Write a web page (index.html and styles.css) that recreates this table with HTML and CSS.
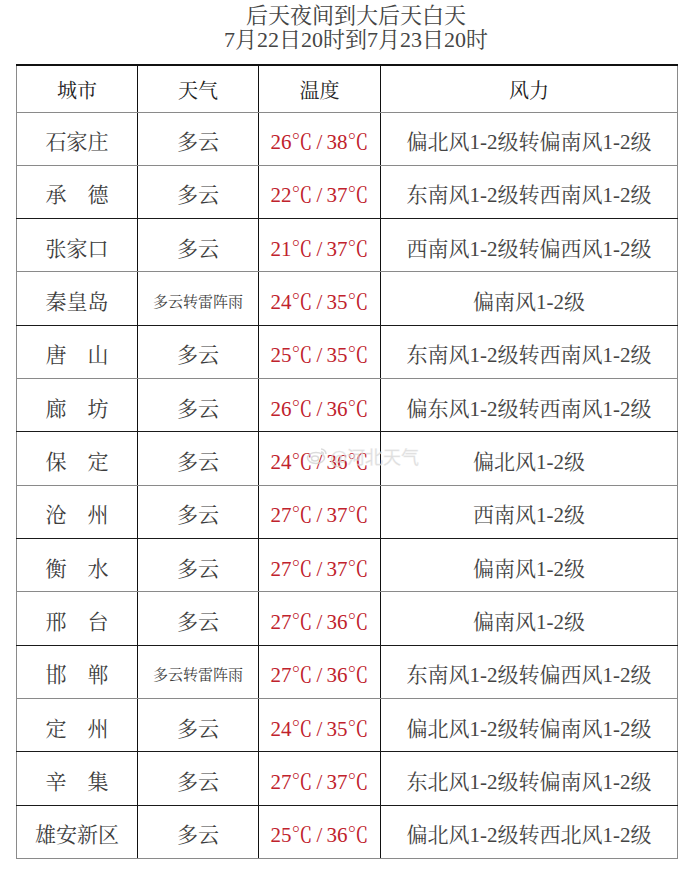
FILE: index.html
```html
<!DOCTYPE html>
<html lang="zh-CN">
<head>
<meta charset="utf-8">
<title>后天夜间到大后天白天</title>
<link rel="stylesheet" href="styles.css">
</head>
<body>
<div class="page">
  <div class="title">
    <div class="title-line">后天夜间到大后天白天</div>
    <div class="title-line">7月22日20时到7月23日20时</div>
  </div>
  <table class="forecast">
    <colgroup>
      <col class="c-city"><col class="c-weather"><col class="c-temp"><col class="c-wind">
    </colgroup>
    <thead>
      <tr class="head-row"><th>城市</th><th>天气</th><th>温度</th><th>风力</th></tr>
    </thead>
    <tbody>
      <tr class="row-gray"><td class="city">石家庄</td><td class="weather">多云</td><td class="temp">26℃<span class="slash">/</span>38℃</td><td class="wind">偏北风1-2级转偏南风1-2级</td></tr>
      <tr class="row-black"><td class="city">承　德</td><td class="weather">多云</td><td class="temp">22℃<span class="slash">/</span>37℃</td><td class="wind">东南风1-2级转西南风1-2级</td></tr>
      <tr class="row-gray"><td class="city">张家口</td><td class="weather">多云</td><td class="temp">21℃<span class="slash">/</span>37℃</td><td class="wind">西南风1-2级转偏西风1-2级</td></tr>
      <tr class="row-black"><td class="city">秦皇岛</td><td class="weather small">多云转雷阵雨</td><td class="temp">24℃<span class="slash">/</span>35℃</td><td class="wind">偏南风1-2级</td></tr>
      <tr class="row-gray"><td class="city">唐　山</td><td class="weather">多云</td><td class="temp">25℃<span class="slash">/</span>35℃</td><td class="wind">东南风1-2级转西南风1-2级</td></tr>
      <tr class="row-black"><td class="city">廊　坊</td><td class="weather">多云</td><td class="temp">26℃<span class="slash">/</span>36℃</td><td class="wind">偏东风1-2级转西南风1-2级</td></tr>
      <tr class="row-gray"><td class="city">保　定</td><td class="weather">多云</td><td class="temp">24℃<span class="slash">/</span>36℃</td><td class="wind">偏北风1-2级</td></tr>
      <tr class="row-black"><td class="city">沧　州</td><td class="weather">多云</td><td class="temp">27℃<span class="slash">/</span>37℃</td><td class="wind">西南风1-2级</td></tr>
      <tr class="row-gray"><td class="city">衡　水</td><td class="weather">多云</td><td class="temp">27℃<span class="slash">/</span>37℃</td><td class="wind">偏南风1-2级</td></tr>
      <tr class="row-black"><td class="city">邢　台</td><td class="weather">多云</td><td class="temp">27℃<span class="slash">/</span>36℃</td><td class="wind">偏南风1-2级</td></tr>
      <tr class="row-gray"><td class="city">邯　郸</td><td class="weather small">多云转雷阵雨</td><td class="temp">27℃<span class="slash">/</span>36℃</td><td class="wind">东南风1-2级转偏西风1-2级</td></tr>
      <tr class="row-black"><td class="city">定　州</td><td class="weather">多云</td><td class="temp">24℃<span class="slash">/</span>35℃</td><td class="wind">偏北风1-2级转偏南风1-2级</td></tr>
      <tr class="row-black"><td class="city">辛　集</td><td class="weather">多云</td><td class="temp">27℃<span class="slash">/</span>37℃</td><td class="wind">东北风1-2级转偏南风1-2级</td></tr>
      <tr class="row-last"><td class="city">雄安新区</td><td class="weather">多云</td><td class="temp">25℃<span class="slash">/</span>36℃</td><td class="wind">偏北风1-2级转西北风1-2级</td></tr>
    </tbody>
  </table>
  <div class="watermark">
    <svg class="wm-logo" width="22" height="18" viewBox="0 0 22 18">
      <ellipse cx="10" cy="11" rx="8.5" ry="5.5" fill="none" stroke="#d0d0d0" stroke-width="1.6"/>
      <ellipse cx="9" cy="11.5" rx="3.5" ry="2.5" fill="none" stroke="#d0d0d0" stroke-width="1.4"/>
      <path d="M15 2 A5 5 0 0 1 20 7" fill="none" stroke="#d0d0d0" stroke-width="1.5"/>
      <path d="M15 5 A2.5 2.5 0 0 1 17.5 7.5" fill="none" stroke="#d0d0d0" stroke-width="1.3"/>
    </svg>
    <span class="wm-text">@河北天气</span>
  </div>
</div>
</body>
</html>
```
FILE: styles.css
```css
html, body {
  margin: 0;
  padding: 0;
  background: #ffffff;
}

.page {
  position: relative;
  width: 690px;
  height: 892px;
  font-family: "Liberation Serif", "Noto Serif CJK SC", "Noto Sans CJK SC", serif;
  color: #3d3d3d;
}

.title {
  padding-top: 4px;
  padding-left: 22px;
  height: 48px;
  margin-bottom: 12px;
  text-align: center;
  font-size: 22px;
  line-height: 24px;
  color: #444444;
}

.forecast {
  margin-left: 16px;
  width: 661px;
  height: 795px;
  border-collapse: collapse;
  table-layout: fixed;
  border-top: 2px solid #111111;
  border-left: 1px solid #8a8a8a;
  border-right: 1px solid #8a8a8a;
  border-bottom: 1px solid #8a8a8a;
}

.c-city { width: 121px; }
.c-weather { width: 121px; }
.c-temp { width: 122px; }
.c-wind { width: 297px; }

.forecast th,
.forecast td {
  padding: 0;
  text-align: center;
  vertical-align: middle;
  border-left: 1px solid #111111;
  border-right: 1px solid #111111;
}

.forecast th:first-child,
.forecast td:first-child {
  border-left: 1px solid #8a8a8a;
}

.forecast th:last-child,
.forecast td:last-child {
  border-right: 1px solid #8a8a8a;
}

.head-row {
  height: 47px;
}

.head-row th {
  font-weight: normal;
  font-size: 20px;
  color: #222222;
  border-bottom: 1px solid #8a8a8a;
  padding-top: 2px;
}

.forecast tbody td {
  font-size: 21px;
  padding-top: 3px;
}

.row-gray td { border-bottom: 1px solid #8a8a8a; }
.row-black td { border-bottom: 1px solid #1a1a1a; }
.row-last td { border-bottom: 1px solid #8a8a8a; }

.city {
  color: #3d3d3d;
}

.weather {
  color: #3d3d3d;
}

.forecast tbody td.small {
  font-size: 15px;
}

.temp {
  color: #c0222c;
  padding-left: 4px;
}

.slash {
  display: inline-block;
  margin: 0 4px;
}

.wind {
  color: #444444;
}

.watermark {
  position: absolute;
  left: 306px;
  top: 443px;
  display: flex;
  align-items: center;
  gap: 2px;
  opacity: 0.75;
}

.wm-text {
  font-family: "Noto Sans CJK SC", sans-serif;
  font-size: 18px;
  color: #d2d2d2;
  -webkit-text-stroke: 0.3px #e8e8e8;
}
```
